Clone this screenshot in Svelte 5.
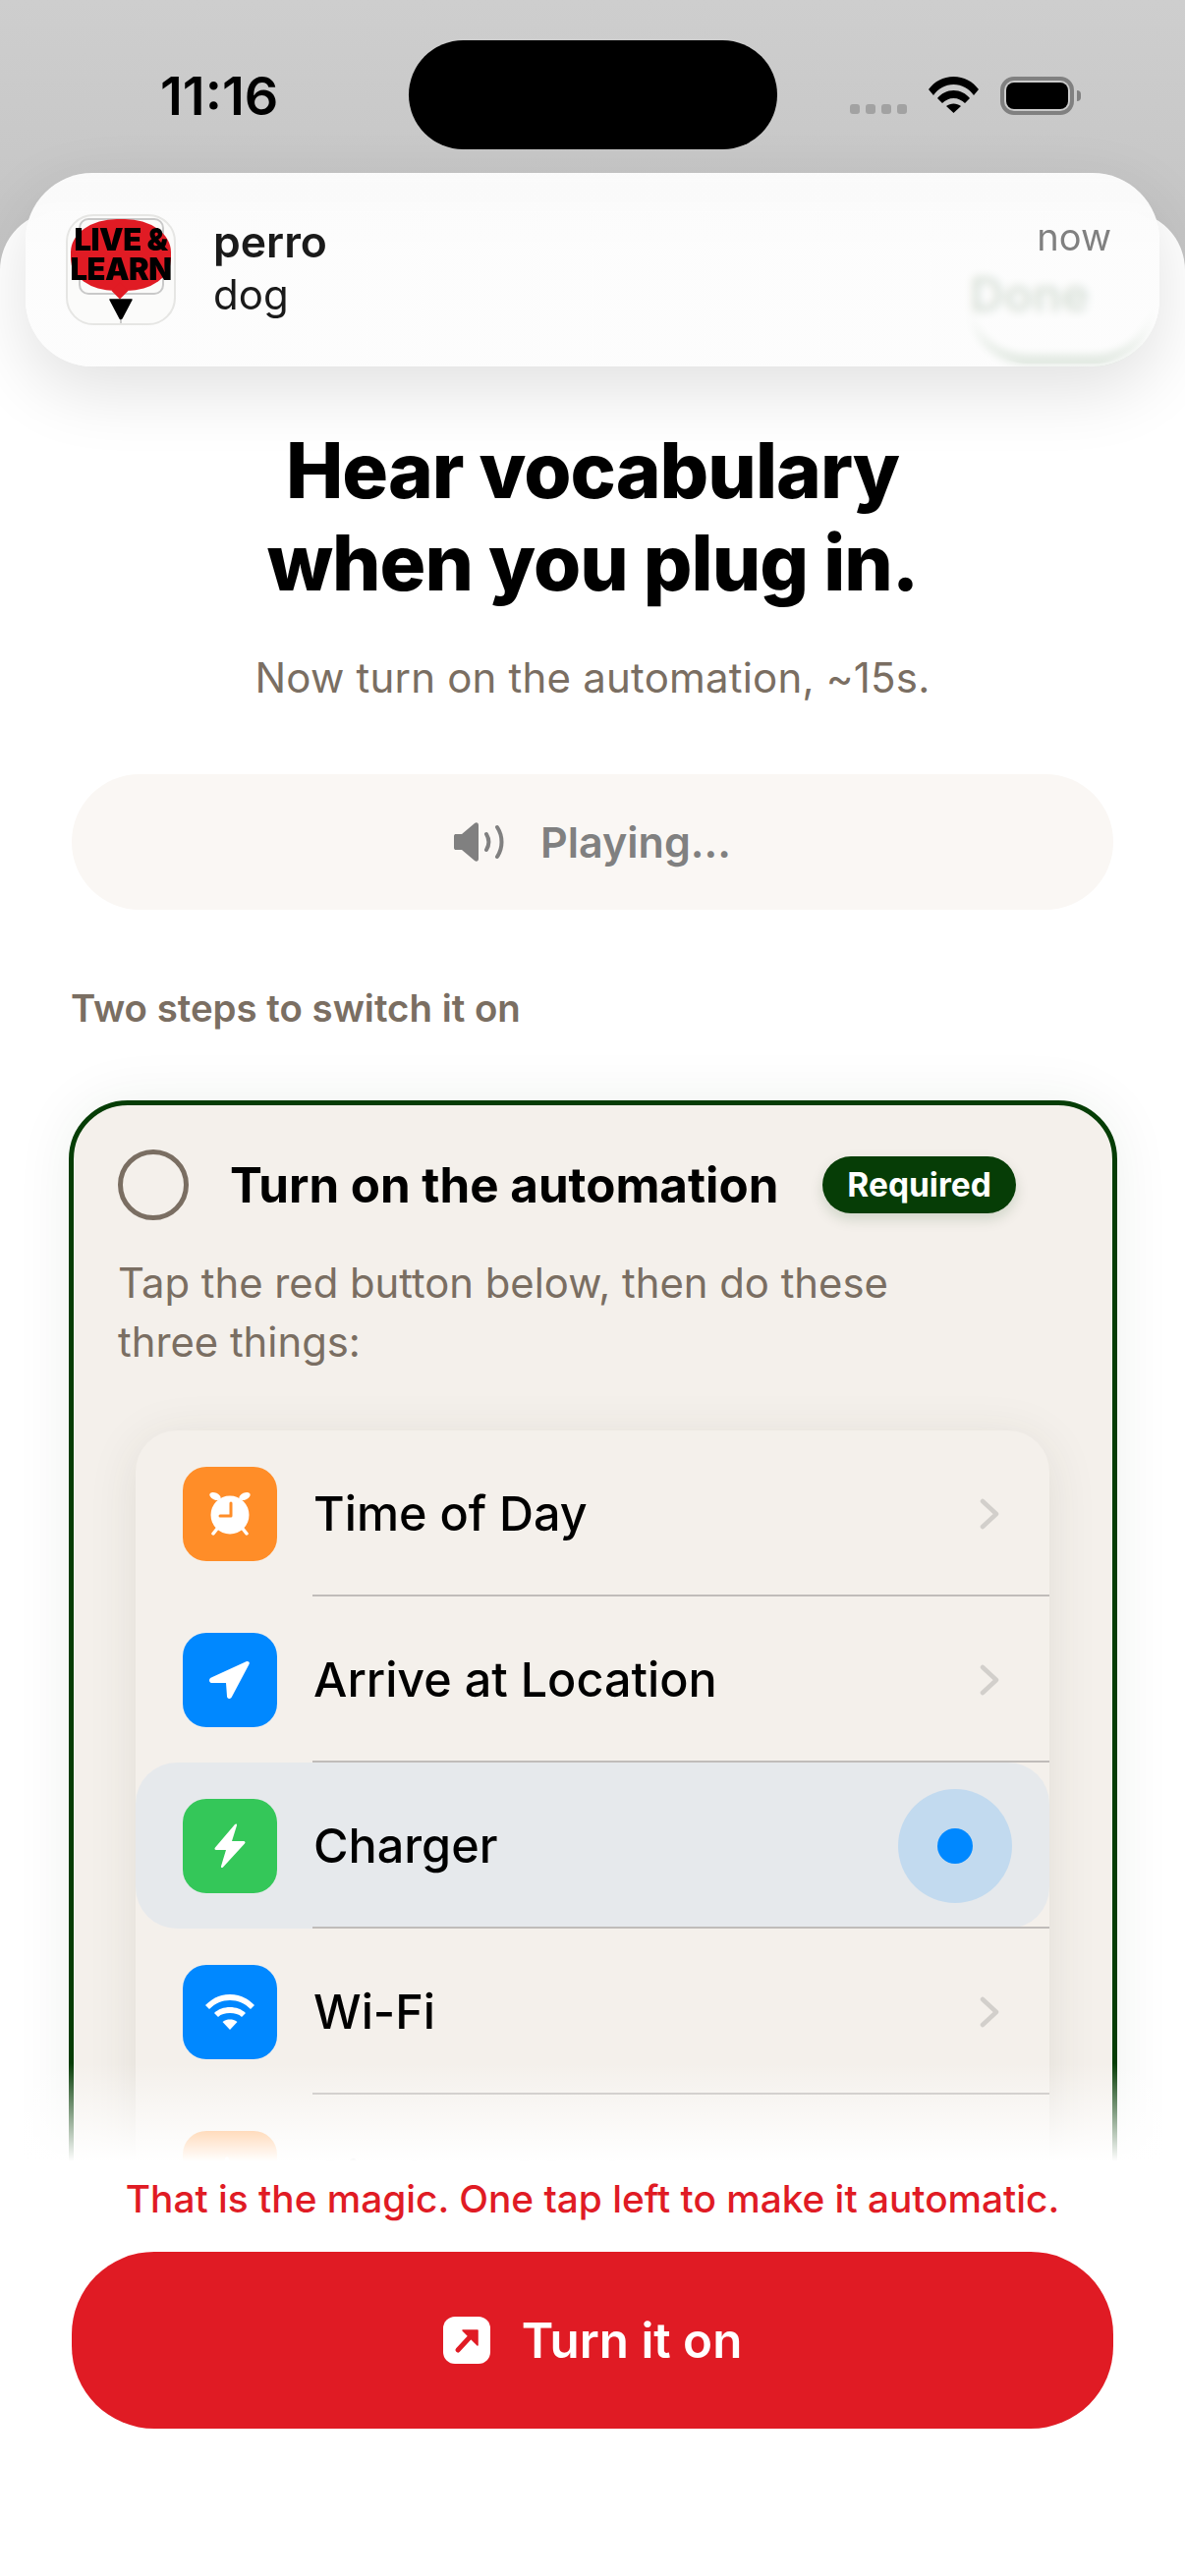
<script>
  const rows = [
    { label: "Time of Day", tone: "orange", icon: "clock" },
    { label: "Arrive at Location", tone: "blue", icon: "arrow" },
    { label: "Charger", tone: "green", icon: "bolt", active: true },
    { label: "Wi-Fi", tone: "blue", icon: "wifi" },
    { label: "Airplane Mode", tone: "orange", icon: "plane" },
  ];
</script>

<div class="phone">
  <div class="status">
    <span class="time">11:16</span>
    <div class="island"></div>
    <div class="status-right">
      <div class="dots"><i></i><i></i><i></i><i></i></div>
      <svg class="wifi" viewBox="0 0 51 37" width="51" height="37">
        <path d="M0 13C6 5 15 0 25.500 0S45 5 51 13L46 19C41 12 34 8 25.500 8S10 12 5 19Z" fill="#000" />
        <path d="M9 22C13 17 19 14 25.500 14S38 17 42 22L37 27C34 24 30 22 25.500 22S17 24 14 27Z" fill="#000" />
        <path d="M18 30C20 28.500 23 27.500 25.500 27.500S31 28.500 33 30L25.500 37Z" fill="#000" />
      </svg>
      <div class="battery"><div class="fill"></div></div>
      <div class="nub"></div>
    </div>
  </div>

  <div class="sheet">
    <div class="sheet-top">
      <div class="done">Done</div>
    </div>
    <h1>Hear vocabulary<br />when you plug in.</h1>
    <p class="sub">Now turn on the automation, ~15s.</p>
    <div class="playing">
      <svg viewBox="0 0 54 40" width="54" height="40">
        <path d="M0 14C0 12.500 1 12 2 12H8L21 1C23 -.5 25 .5 25 3V37C25 39.500 23 40.500 21 39L8 28H2C1 28 0 27.500 0 26Z" fill="#808080" />
        <path d="M33 12C36 17 36 23 33 28M44 5C50 14 50 26 44 35" fill="none" stroke="#808080" stroke-width="4" stroke-linecap="round" />
      </svg>
      <span>Playing...</span>
    </div>
    <div class="steps-label">Two steps to switch it on</div>

    <div class="card">
      <div class="card-head">
        <div class="radio"></div>
        <span class="card-title">Turn on the automation</span>
        <span class="badge">Required</span>
      </div>
      <p class="desc">Tap the red button below, then do these<br />three things:</p>
      <div class="list">
        {#each rows as row}
          <div class="row" class:active={row.active}>
            <div class="tile {row.tone}">
              {#if row.icon === "clock"}
                <svg viewBox="0 0 42 45" width="42" height="45">
                  <ellipse cx="6" cy="5" rx="6" ry="3.500" transform="rotate(25 6 5)" fill="#fff" />
                  <ellipse cx="36" cy="5" rx="6" ry="3.500" transform="rotate(-25 36 5)" fill="#fff" />
                  <circle cx="21" cy="24" r="19.500" fill="#fff" />
                  <path d="M8 38L4 43M34 38L38 43" stroke="#fff" stroke-width="3.500" stroke-linecap="round" />
                  <path d="M22 12V25H11" fill="none" stroke="#ff8d28" stroke-width="3" stroke-linecap="round" stroke-linejoin="round" />
                </svg>
              {:else if row.icon === "arrow"}
                <svg viewBox="0 0 42 40" width="42" height="40">
                  <path d="M38 1C40 .5 41.500 2 40.500 4L23 37C21.500 40 18 39.500 18 36.500L17 23H3C-.5 23 -1 19 2 17.500Z" fill="#fff" />
                </svg>
              {:else if row.icon === "bolt"}
                <svg viewBox="0 0 32 46" width="32" height="46">
                  <path d="M21 1C22 0 23.500 .5 23 2L18 18H30C31.500 18 32 19.500 31 20.500L9 44.500C8 45.500 6.500 45 7 43.500L12 27H2C.5 27 0 25.500 1 24.500Z" fill="#fff" />
                </svg>
              {:else if row.icon === "wifi"}
                <svg viewBox="0 0 50 36" width="50" height="36">
                  <path d="M0 11C7 4 15 0 25 0S43 4 50 11L46 15C40 9 33 6 25 6S10 9 4 15Z" fill="#fff" />
                  <path d="M9 19C13 15 19 13 25 13S37 15 41 19L37 23C34 20 30 19 25 19S16 20 13 23Z" fill="#fff" />
                  <path d="M17.500 28C20 26 22.500 25.500 25 25.500S30 26 32.500 28L25 36Z" fill="#fff" />
                </svg>
              {:else if row.icon === "plane"}
                <svg viewBox="0 0 44 44" width="44" height="44">
                  <path d="M17 2C18 0 20 0 21 2L25 15L40 24V29L25 25L24 35L29 39V42L20 40L11 42V39L16 35L15 25L1 29V24L14 15Z" fill="#fff" />
                </svg>
              {/if}
            </div>
            <span class="label">{row.label}</span>
            {#if row.active}
              <div class="pulse"><div class="dot"></div></div>
            {:else}
              <svg class="chev" viewBox="0 0 20 32" width="20" height="32">
                <path d="M3 3L17 16L3 29" fill="none" stroke="#d2cfcb" stroke-width="4.500" stroke-linecap="round" stroke-linejoin="round" />
              </svg>
            {/if}
          </div>
        {/each}
      </div>
    </div>
  </div>

  <div class="notif">
    <div class="app-icon">
      <div class="tray"></div>
      <div class="blob"></div>
      <div class="tail"></div>
      <div class="logo">LIVE &amp;<br />LEARN</div>
      <svg class="pin" viewBox="0 0 24 28" width="24" height="28">
        <path d="M1 1H23L13 20C12.500 21 11.500 21 11 20Z" fill="#000" stroke="#000" stroke-width="1.500" stroke-linejoin="round" />
        <path d="M12 22V28" stroke="#999" stroke-width="1" />
      </svg>
    </div>
    <div class="notif-text">
      <div class="word">perro</div>
      <div class="trans">dog</div>
    </div>
    <span class="now">now</span>
  </div>

  <div class="footer">
    <div class="hint">That is the magic. One tap left to make it automatic.</div>
    <div class="cta">
      <svg viewBox="0 0 48 48" width="48" height="48">
        <rect width="48" height="48" rx="12" fill="#fff" />
        <path d="M15 34L28 20" fill="none" stroke="#e01b24" stroke-width="5" stroke-linecap="round" />
        <path d="M20 14H35V29Z" fill="#e01b24" stroke="#e01b24" stroke-width="1.500" stroke-linejoin="round" />
      </svg>
      <span>Turn it on</span>
    </div>
  </div>
</div>

<style>
  :global(body) {
    margin: 0;
    background: #fff;
  }

  .phone {
    position: relative;
    width: 1206px;
    height: 2622px;
    overflow: hidden;
    background: linear-gradient(#cecece, #c4c4c4 260px);
    font-family: Inter, "Noto Sans", sans-serif;
  }

  .status {
    height: 215px;
    box-sizing: border-box;
    padding-top: 41px;
    display: grid;
    grid-template-columns: 1fr 375px 1fr;
    align-items: start;
  }

  .time {
    padding-left: 163px;
    font-size: 54px;
    font-weight: 600;
    line-height: 114px;
    color: #000;
  }

  .island {
    height: 111px;
    border-radius: 56px;
    background: #000;
  }

  .status-right {
    display: flex;
    align-items: flex-start;
    justify-content: flex-end;
    padding: 37px 106px 0 0;
  }

  .dots {
    display: flex;
    gap: 6px;
    margin-top: 28px;
    margin-right: 22px;
  }

  .dots i {
    width: 10px;
    height: 10px;
    border-radius: 3px;
    background: #a2a2a2;
  }

  .battery {
    width: 75px;
    height: 39px;
    box-sizing: border-box;
    margin-left: 22px;
    padding: 2px;
    border: 4px solid #808080;
    border-radius: 14px;
  }

  .fill {
    width: 100%;
    height: 100%;
    background: #000;
    border-radius: 8px;
  }

  .nub {
    width: 4px;
    height: 11px;
    margin: 14px 0 0 3px;
    background: #808080;
    border-radius: 0 4px 4px 0;
  }

  .sheet {
    height: 2407px;
    background: #fff;
    border-radius: 60px 60px 0 0;
    box-sizing: border-box;
    padding: 0 73px;
  }

  .sheet-top {
    height: 217px;
    display: flex;
    justify-content: flex-end;
    margin-right: -40px;
  }

  .done {
    box-sizing: border-box;
    width: 186px;
    height: 155px;
    border-radius: 0 0 60px 60px;
    border-bottom: 8px solid #1d5a1d;
    color: #063d06;
    font-size: 48px;
    font-weight: 600;
    line-height: 170px;
    text-align: left;
  }

  h1 {
    margin: 0;
    font-size: 78px;
    font-weight: 800;
    line-height: 94px;
    letter-spacing: -1px;
    text-align: center;
    color: #000;
  }

  .sub {
    margin: 42px 0 0;
    font-size: 42px;
    letter-spacing: 0.2px;
    line-height: 56px;
    text-align: center;
    color: #7a6e62;
  }

  .playing {
    height: 138px;
    margin-top: 70px;
    border-radius: 69px;
    background: #faf7f4;
    display: flex;
    align-items: center;
    justify-content: center;
    gap: 34px;
    color: #808080;
    font-size: 43px;
    font-weight: 600;
  }

  .steps-label {
    margin: 77px 0 0 -1px;
    font-size: 38.400px;
    line-height: 46px;
    font-weight: 600;
    color: #7a6e62;
  }

  .card {
    box-sizing: border-box;
    height: 1160px;
    margin: 71px -4px 0 -3px;
    padding: 45px 0 0 45px;
    border: 5px solid #063d06;
    border-radius: 60px;
    background: #f4f0eb;
    box-shadow: 0 0 60px rgba(6, 61, 6, 0.07);
  }

  .card-head {
    display: flex;
    align-items: center;
    height: 72px;
  }

  .radio {
    box-sizing: border-box;
    width: 72px;
    height: 72px;
    border: 5px solid #7a6e62;
    border-radius: 50%;
  }

  .card-title {
    margin-left: 42px;
    font-size: 49.300px;
    font-weight: 700;
    color: #000;
  }

  .badge {
    margin-left: 45px;
    padding: 0 25px;
    line-height: 58px;
    border-radius: 29px;
    background: #063d06;
    color: #fff;
    font-size: 33.500px;
    font-weight: 700;
    box-shadow: 0 6px 14px rgba(6, 61, 6, 0.15);
  }

  .desc {
    margin: 34px 0 0;
    font-size: 41.800px;
    line-height: 60px;
    color: #7a6e62;
  }

  .list {
    margin: 60px 0 0 18px;
    width: 930px;
    border-radius: 42px;
    background: #f4f0eb;
    box-shadow: 0 8px 50px rgba(60, 60, 40, 0.1);
  }

  .row {
    position: relative;
    display: flex;
    align-items: center;
    height: 169px;
    box-sizing: border-box;
    padding: 0 51px 0 48px;
  }

  .row::after {
    content: "";
    position: absolute;
    left: 180px;
    right: 0;
    bottom: 0;
    height: 2px;
    background: #c0bcb9;
  }

  .row.active {
    background: #e6e9ec;
    border-radius: 42px;
  }

  .tile {
    width: 96px;
    height: 96px;
    flex: none;
    border-radius: 24px;
    display: flex;
    align-items: center;
    justify-content: center;
  }

  .orange {
    background: #ff8d28;
  }

  .blue {
    background: #0088ff;
  }

  .green {
    background: #34c759;
  }

  .label {
    flex: 1;
    margin-left: 37px;
    font-size: 48.500px;
    font-weight: 500;
    color: #000;
  }

  .pulse {
    width: 116px;
    height: 116px;
    margin-right: -13px;
    border-radius: 50%;
    background: #c2daef;
    display: flex;
    align-items: center;
    justify-content: center;
  }

  .dot {
    width: 36px;
    height: 36px;
    border-radius: 50%;
    background: #0088ff;
  }

  .notif {
    position: absolute;
    left: 26px;
    top: 176px;
    width: 1154px;
    height: 197px;
    box-sizing: border-box;
    padding: 42px 49px 0 41px;
    display: flex;
    align-items: flex-start;
    border-radius: 68px;
    background: linear-gradient(rgba(252, 252, 252, 0.97) 40px, rgba(252, 252, 252, 0.85) 70px);
    backdrop-filter: blur(5px);
    box-shadow: 0 24px 70px rgba(0, 0, 0, 0.12);
  }

  .app-icon {
    position: relative;
    width: 112px;
    height: 113px;
    flex: none;
    box-sizing: border-box;
    border: 2px solid #e6e6e4;
    border-radius: 28px;
    background: #fbfbfa;
    overflow: hidden;
  }

  .tray {
    position: absolute;
    left: 11px;
    top: 2px;
    width: 87px;
    height: 78px;
    box-sizing: border-box;
    border: 2px solid #c9c9c9;
    border-radius: 10px;
  }

  .blob {
    position: absolute;
    left: 3px;
    top: 3px;
    width: 102px;
    height: 73px;
    border-radius: 46% 46% 44% 44%;
    background: #e01b24;
  }

  .tail {
    position: absolute;
    left: 47px;
    top: 70px;
    width: 12px;
    height: 12px;
    background: #e01b24;
    transform: rotate(45deg);
  }

  .logo {
    position: absolute;
    left: -4px;
    right: -4px;
    top: 9px;
    font-weight: 900;
    font-size: 31px;
    line-height: 30px;
    letter-spacing: -0.5px;
    text-align: center;
    color: #000;
  }

  .pin {
    position: absolute;
    left: 42px;
    top: 84px;
  }

  .notif-text {
    margin: 2px 0 0 38px;
    flex: 1;
  }

  .word {
    font-size: 44.500px;
    line-height: 52px;
    font-weight: 600;
    color: #1a1a1a;
  }

  .trans {
    font-size: 42px;
    line-height: 56px;
    color: #1a1a1a;
  }

  .now {
    font-size: 38px;
    line-height: 46px;
    color: #808080;
  }

  .footer {
    position: absolute;
    left: 0;
    right: 0;
    bottom: 0;
    height: 522px;
    box-sizing: border-box;
    padding: 112px 73px 0;
    background: linear-gradient(rgba(255, 255, 255, 0), #fff 100px);
  }

  .hint {
    font-size: 38.800px;
    line-height: 52px;
    font-weight: 500;
    text-align: center;
    color: #e01b24;
  }

  .cta {
    height: 180px;
    margin-top: 28px;
    border-radius: 84px;
    background: #e01b24;
    display: flex;
    align-items: center;
    justify-content: center;
    gap: 32px;
    color: #fff;
    font-size: 49.300px;
    font-weight: 600;
  }
</style>
